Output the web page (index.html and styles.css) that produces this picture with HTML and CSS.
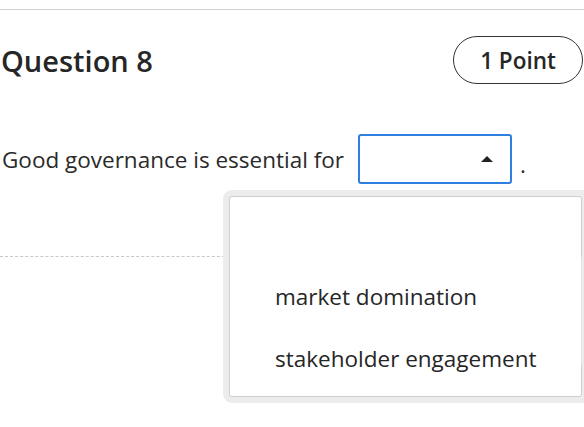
FILE: index.html
```html
<!DOCTYPE html>
<html>
<head>
<meta charset="utf-8">
<link rel="stylesheet" href="styles.css">
</head>
<body>
<div class="page">
  <div class="top-rule"></div>
  <div class="q-header">
    <h2 class="q-title">Question 8</h2>
    <span class="points">1 Point</span>
  </div>
  <div class="q-body">
    <span class="q-text">Good governance is essential for</span>
    <div class="select-wrap">
      <div class="select">
        <svg class="caret" width="12" height="6" viewBox="0 0 12 6"><path d="M0 6 L6 0 L12 6 Z" fill="#222"/></svg>
      </div>
      <div class="menu">
        <div class="menu-inner">
          <div class="opt opt-empty"></div>
          <div class="opt">market domination</div>
          <div class="opt">stakeholder engagement</div>
          <div class="scrollbar"></div>
        </div>
      </div>
    </div>
    <span class="period">.</span>
  </div>
  <div class="dash-rule"></div>
</div>
</body>
</html>
```
FILE: styles.css
```css
html, body {
  margin: 0;
  padding: 0;
  background: #fff;
}
body {
  font-family: "Open Sans", "Noto Sans", sans-serif;
  color: #262626;
  width: 584px;
  height: 427px;
  overflow: hidden;
}
.page {
  padding-top: 9px;
}
.top-rule {
  height: 0;
  border-top: 1px solid #cfcfcf;
}
.q-header {
  display: flex;
  justify-content: space-between;
  align-items: center;
  height: 48px;
  margin-top: 26px;
  padding-left: 1px;
  padding-right: 1px;
}
.q-title {
  margin: 0;
  font-size: 29px;
  font-weight: 600;
  color: #262626;
}
.points {
  box-sizing: border-box;
  width: 130px;
  height: 48px;
  border: 1px solid #333;
  border-radius: 24px;
  display: flex;
  align-items: center;
  justify-content: center;
  font-size: 22.5px;
  font-weight: 600;
  color: #262626;
}
.q-body {
  display: flex;
  align-items: center;
  margin-top: 50px;
  padding-left: 2px;
  font-size: 22.5px;
  color: #2a2a2a;
}
.q-text {
  margin-right: 14px;
}
.select-wrap {
  position: relative;
}
.select {
  box-sizing: border-box;
  width: 154px;
  height: 50px;
  border: 2px solid #2f7fdf;
  border-radius: 3px;
  position: relative;
}
.caret {
  position: absolute;
  left: 121px;
  top: 20px;
}
.period {
  margin-left: 8px;
  margin-top: 10px;
}
.menu {
  position: absolute;
  left: -135px;
  top: 56px;
  width: 372px;
  box-sizing: border-box;
  padding: 6px 0 6px 6px;
  background: #ececec;
  border-radius: 9px 0 0 9px;
  z-index: 2;
}
.menu-inner {
  position: relative;
  background: #fff;
  border: 1px solid #cfcfcf;
  border-radius: 3px;
  width: 353px;
  box-sizing: border-box;
  height: 201px;
}
.opt {
  padding-left: 45px;
  height: 62px;
  line-height: 62px;
  font-size: 22.5px;
  color: #262626;
}
.opt-empty {
  height: 69px;
}
.scrollbar {
  position: absolute;
  right: -1px;
  top: 60px;
  height: 108px;
  width: 1px;
  background: #e4e4e4;
}
.dash-rule {
  margin-top: 72px;
  height: 0;
  border-top: 1px dashed #c8c8c8;
  width: 230px;
}
```
